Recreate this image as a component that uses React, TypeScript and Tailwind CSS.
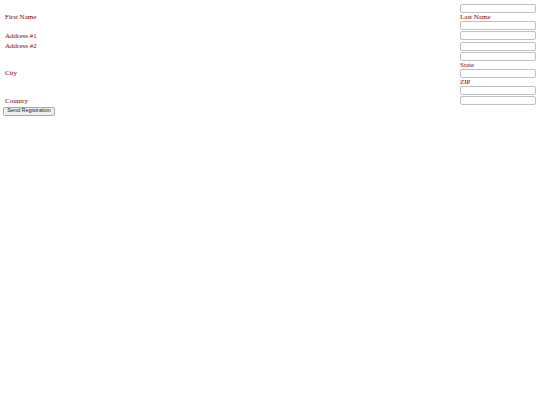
import React from 'react';

const label = "text-[7px] leading-[8px] text-[#800000]";
const field = "block w-full h-[9px] border border-[#c0c0c0] rounded-[2px] bg-white";

function Field() {
  return <input type="text" className={field} />;
}

function Row({ name, children }: { name: string; children: React.ReactNode }) {
  return (
    <>
      <div className={`flex items-center pl-[2px] ${label}`}>{name}</div>
      <div className="flex flex-col">{children}</div>
    </>
  );
}

export default function App() {
  return (
    <div className="min-h-[405px] bg-white px-[3px] pt-[4px] font-['Liberation_Serif',serif]">
      <form className="grid grid-cols-[1fr_76px] gap-x-[1px] gap-y-[1.3px] pr-[1px]" onSubmit={(e) => e.preventDefault()}>
        <Row name="First Name">
          <Field />
          <span className={label}>Last Name</span>
          <Field />
        </Row>
        <Row name="Address #1">
          <Field />
        </Row>
        <Row name="Address #2">
          <Field />
        </Row>
        <Row name="City">
          <Field />
          <span className={label}>State</span>
          <Field />
          <span className={label}>ZIP</span>
          <Field />
        </Row>
        <Row name="Country">
          <Field />
        </Row>
      </form>
      <button
        type="submit"
        className="mt-[1.5px] h-[9px] w-[52px] flex items-center justify-center border border-[#a8a8a8] rounded-[2px] bg-[#f0f0f0] text-[5.5px] leading-none text-[#222] font-['Liberation_Sans',sans-serif]"
      >
        Send Registration
      </button>
    </div>
  );
}
